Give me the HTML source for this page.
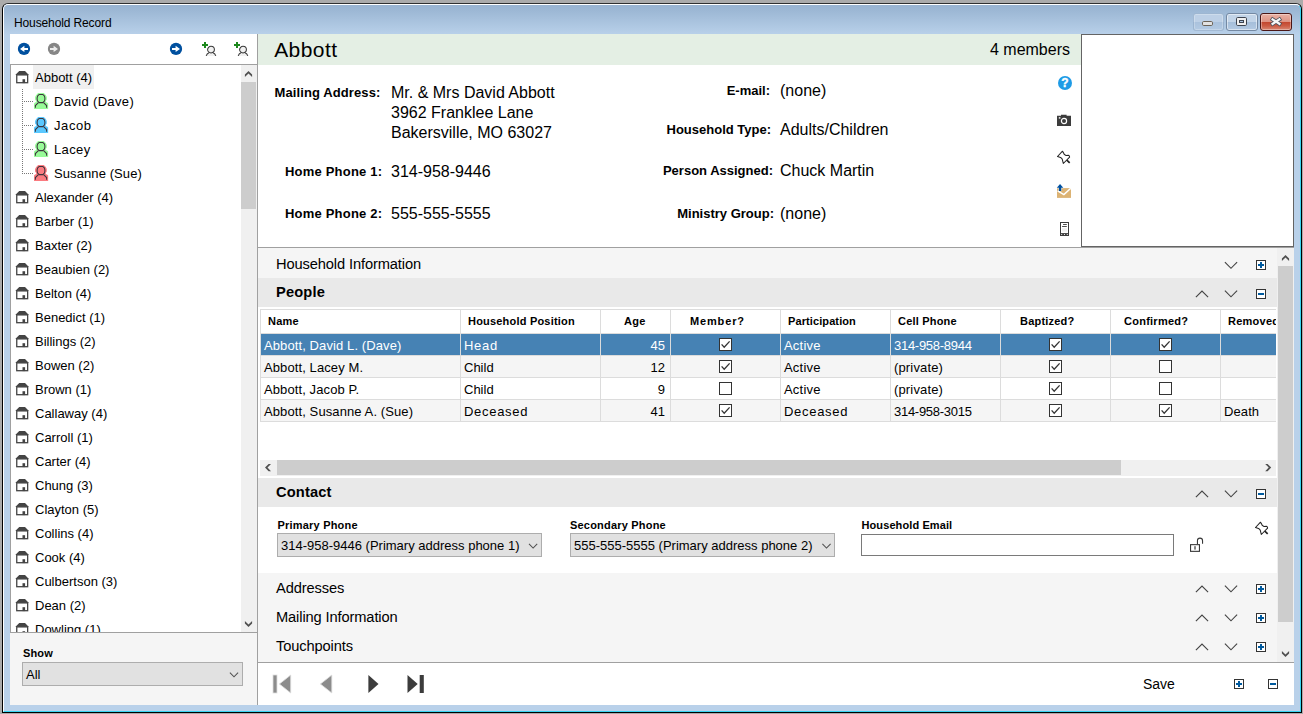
<!DOCTYPE html>
<html lang="en">
<head>
<meta charset="utf-8">
<title>Household Record</title>
<style>
*{box-sizing:border-box;margin:0;padding:0}
html,body{width:1303px;height:714px;overflow:hidden;background:#ababab}
body{position:relative;font-family:"Liberation Sans",sans-serif;color:#000;font-size:13px}
.win{position:absolute;left:2px;top:3px;width:1300px;height:710px;border:1px solid #000;border-top-color:#303030;border-radius:6px 6px 0 0;background:#b9d1ea;overflow:hidden}
.win .hl{position:absolute;left:0;top:0;right:0;bottom:0;border-radius:5px 5px 0 0;border-top:1px solid #fff;border-left:1px solid #fff;border-right:1px solid #38d4f2;border-bottom:1px solid #38d4f2;background:linear-gradient(#98b3d1 0px,#9db8d5 6px,#b9d1ea 30px,#b9d1ea 100%)}
.t{position:absolute;white-space:nowrap;line-height:1}
svg{position:absolute;overflow:visible}
</style>
</head>
<body>
<div class="win"><div class="hl"></div></div>

<!-- caption -->
<div class="t" style="top:17px;font-size:12px;left:14px;letter-spacing:-0.12px;">Household Record</div>
<div style="position:absolute;left:1193px;top:13px;width:31px;height:18px;background:linear-gradient(#bdd0e6 0 47%,#a9c1dc 47%,#b3cae3 100%);border:1px solid rgba(140,165,195,.55);border-radius:3px;box-shadow:inset 0 0 0 1px rgba(255,255,255,.25)"></div>
<div style="position:absolute;left:1226px;top:13px;width:32px;height:18px;background:linear-gradient(#c2d4e8 0 47%,#a4bdd9 47%,#b3cae3 100%);border:1px solid #7489a3;border-radius:3px;box-shadow:inset 0 0 0 1px rgba(255,255,255,.5)"></div>
<div style="position:absolute;left:1260px;top:13px;width:32px;height:18px;background:linear-gradient(#e9b1a5 0,#de9484 47%,#c1432b 47%,#cc5d45 75%,#d98a76 100%);border:1px solid #4a1616;border-radius:3px;box-shadow:inset 0 0 0 1px rgba(255,255,255,.35)"></div>
<svg style="left:1202px;top:21px" width="11" height="5" viewBox="0 0 11 5"><rect x="0.5" y="0.5" width="10" height="4" rx="1.2" fill="#e2e2e2" stroke="#6b6256" stroke-width="1"/></svg>
<svg style="left:1236px;top:17px" width="11" height="9" viewBox="0 0 11 9"><rect x="0.5" y="0.5" width="10" height="8" rx="1.2" fill="#f0f0f0" stroke="#3d4450" stroke-width="1"/><rect x="3.5" y="3.5" width="4" height="2" fill="#a9c3e0" stroke="#3d4450" stroke-width="1"/></svg>
<svg style="left:1270px;top:17px" width="12" height="9" viewBox="0 0 12 9"><path d="M2.6 2.4L9.4 6.8M9.4 2.4L2.6 6.8" stroke="#49505c" stroke-width="3.9" stroke-linecap="square"/><path d="M2.6 2.4L9.4 6.8M9.4 2.4L2.6 6.8" stroke="#f6f6f6" stroke-width="2.3" stroke-linecap="square"/></svg>
<div style="position:absolute;left:10px;top:34px;width:1284px;height:671px;background:#fff;"></div>
<!-- left panel -->
<svg style="left:17px;top:42px" width="14" height="14" viewBox="0 0 14 14"><g transform="translate(0.5 0.4)"><circle cx="6.5" cy="6.5" r="6.15" fill="#00509f"/><polygon points="2.5,6.5 6.9,3.3 6.9,5.5 10.5,5.5 10.5,7.5 6.9,7.5 6.9,9.7" fill="#fff"/></g></svg>
<svg style="left:47px;top:42px" width="14" height="14" viewBox="0 0 14 14"><g transform="translate(0.5 0.4)"><circle cx="6.5" cy="6.5" r="6.15" fill="#868686"/><polygon points="10.5,6.5 6.1,3.3 6.1,5.5 2.5,5.5 2.5,7.5 6.1,7.5 6.1,9.7" fill="#ececec"/></g></svg>
<svg style="left:169px;top:42px" width="14" height="14" viewBox="0 0 14 14"><g transform="translate(0.5 0.4)"><circle cx="6.5" cy="6.5" r="6.15" fill="#00509f"/><polygon points="10.5,6.5 6.1,3.3 6.1,5.5 2.5,5.5 2.5,7.5 6.1,7.5 6.1,9.7" fill="#fff"/></g></svg>
<svg style="left:202px;top:42px" width="15" height="15" viewBox="0 0 15 15"><rect x="2" y="0" width="2" height="6" fill="#1c881c"/><rect x="0" y="2" width="6" height="2" fill="#1c881c"/><path d="M4.2 14C4.8 12 5.8 11.2 7.2 10.8H10.8C12.2 11.2 13.2 12 13.8 14Z" fill="#f0f0f0"/><ellipse cx="9" cy="7.6" rx="3.4" ry="3.3" fill="#f1f1f1" stroke="#383838" stroke-width="1.05"/><path d="M4.2 13.9C4.8 12 5.8 11.2 7 10.7M13.8 13.9C13.2 12 12.2 11.2 11 10.7" fill="none" stroke="#383838" stroke-width="1.05"/></svg>
<svg style="left:234px;top:42px" width="15" height="15" viewBox="0 0 15 15"><rect x="2" y="0" width="2" height="6" fill="#1c881c"/><rect x="0" y="2" width="6" height="2" fill="#1c881c"/><path d="M4.2 14C4.8 12 5.8 11.2 7.2 10.8H10.8C12.2 11.2 13.2 12 13.8 14Z" fill="#f0f0f0"/><ellipse cx="9" cy="7.6" rx="3.4" ry="3.3" fill="#f1f1f1" stroke="#383838" stroke-width="1.05"/><path d="M4.2 13.9C4.8 12 5.8 11.2 7 10.7M13.8 13.9C13.2 12 12.2 11.2 11 10.7" fill="none" stroke="#383838" stroke-width="1.05"/></svg>
<div style="position:absolute;left:10px;top:64px;width:248px;height:1px;background:#a0a0a0;"></div>
<div style="position:absolute;left:10px;top:64px;width:1px;height:569px;background:#a0a0a0;"></div>
<div style="position:absolute;left:10px;top:632px;width:248px;height:1px;background:#a0a0a0;"></div>
<div style="position:absolute;left:257px;top:34px;width:1px;height:671px;background:#a0a0a0;"></div>
<div style="position:absolute;left:11px;top:65px;width:229px;height:567px;overflow:hidden;background:#fff">
<div style="position:absolute;left:22px;top:0;width:61px;height:24px;background:#f0f0f0"></div>
<div style="position:absolute;left:11px;top:24px;width:1px;height:85px;background:repeating-linear-gradient(#777 0 1px,transparent 1px 2px)"></div>
<div style="position:absolute;left:11px;top:36px;width:11px;height:1px;background:repeating-linear-gradient(90deg,#777 0 1px,transparent 1px 2px)"></div>
<div style="position:absolute;left:11px;top:60px;width:11px;height:1px;background:repeating-linear-gradient(90deg,#777 0 1px,transparent 1px 2px)"></div>
<div style="position:absolute;left:11px;top:84px;width:11px;height:1px;background:repeating-linear-gradient(90deg,#777 0 1px,transparent 1px 2px)"></div>
<div style="position:absolute;left:11px;top:108px;width:11px;height:1px;background:repeating-linear-gradient(90deg,#777 0 1px,transparent 1px 2px)"></div>
<svg style="left:4px;top:6px" width="14" height="13" viewBox="0 0 14 13"><path d="M4.2 0H10L13.9 3.9H0.3Z" fill="#444"/><rect x="1.75" y="3.9" width="10.9" height="7.8" fill="#fff" stroke="#444" stroke-width="1.3"/><rect x="7.5" y="8.2" width="2.6" height="3.9" fill="#444"/></svg>
<div class="t" style="left:24px;top:6px;font-size:13px">Abbott (4)</div>
<svg style="left:22px;top:28px" width="16" height="16" viewBox="0 0 16 16"><g fill="#98fb98"><path d="M5.1 0H10.8L12.8 2L13.8 4V6.6L12.8 8V9L14 9.5L15.15 10.5V16H1.03V10.5L2 9.5L3.2 9V8L2.05 6.6V4L3.2 2Z"/><path d="M6.2 1.4H9.8L11.3 2.9Q11.9 4 11.9 5.5Q11.9 7 11.3 8.1L9.9 9.6H6.1L4.7 8.1Q4.1 7 4.1 5.5Q4.1 4 4.7 2.9Z" fill="none" stroke="#3d353d" stroke-width="1.05"/><path d="M5.4 9.7L2.4 12.5V14.7M10.6 9.7L13.6 12.5V14.7" fill="none" stroke="#3d353d" stroke-width="1.05"/></g></svg>
<div class="t" style="left:43px;top:30px;font-size:13px;letter-spacing:0.35px">David (Dave)</div>
<svg style="left:22px;top:52px" width="16" height="16" viewBox="0 0 16 16"><g fill="#5ac8ff"><path d="M5.1 0H10.8L12.8 2L13.8 4V6.6L12.8 8V9L14 9.5L15.15 10.5V16H1.03V10.5L2 9.5L3.2 9V8L2.05 6.6V4L3.2 2Z"/><path d="M6.2 1.4H9.8L11.3 2.9Q11.9 4 11.9 5.5Q11.9 7 11.3 8.1L9.9 9.6H6.1L4.7 8.1Q4.1 7 4.1 5.5Q4.1 4 4.7 2.9Z" fill="none" stroke="#3d353d" stroke-width="1.05"/><path d="M5.4 9.7L2.4 12.5V14.7M10.6 9.7L13.6 12.5V14.7" fill="none" stroke="#3d353d" stroke-width="1.05"/></g></svg>
<div class="t" style="left:43px;top:54px;font-size:13px;letter-spacing:0.6px">Jacob</div>
<svg style="left:22px;top:76px" width="16" height="16" viewBox="0 0 16 16"><g fill="#98fb98"><path d="M5.1 0H10.8L12.8 2L13.8 4V6.6L12.8 8V9L14 9.5L15.15 10.5V16H1.03V10.5L2 9.5L3.2 9V8L2.05 6.6V4L3.2 2Z"/><path d="M6.2 1.4H9.8L11.3 2.9Q11.9 4 11.9 5.5Q11.9 7 11.3 8.1L9.9 9.6H6.1L4.7 8.1Q4.1 7 4.1 5.5Q4.1 4 4.7 2.9Z" fill="none" stroke="#3d353d" stroke-width="1.05"/><path d="M5.4 9.7L2.4 12.5V14.7M10.6 9.7L13.6 12.5V14.7" fill="none" stroke="#3d353d" stroke-width="1.05"/></g></svg>
<div class="t" style="left:43px;top:78px;font-size:13px;letter-spacing:0.36px">Lacey</div>
<svg style="left:22px;top:100px" width="16" height="16" viewBox="0 0 16 16"><g fill="#fa7b80"><path d="M5.1 0H10.8L12.8 2L13.8 4V6.6L12.8 8V9L14 9.5L15.15 10.5V16H1.03V10.5L2 9.5L3.2 9V8L2.05 6.6V4L3.2 2Z"/><path d="M6.2 1.4H9.8L11.3 2.9Q11.9 4 11.9 5.5Q11.9 7 11.3 8.1L9.9 9.6H6.1L4.7 8.1Q4.1 7 4.1 5.5Q4.1 4 4.7 2.9Z" fill="none" stroke="#3d353d" stroke-width="1.05"/><path d="M5.4 9.7L2.4 12.5V14.7M10.6 9.7L13.6 12.5V14.7" fill="none" stroke="#3d353d" stroke-width="1.05"/></g></svg>
<div class="t" style="left:43px;top:102px;font-size:13px;letter-spacing:0.09px">Susanne (Sue)</div>
<svg style="left:4px;top:126px" width="14" height="13" viewBox="0 0 14 13"><path d="M4.2 0H10L13.9 3.9H0.3Z" fill="#444"/><rect x="1.75" y="3.9" width="10.9" height="7.8" fill="#fff" stroke="#444" stroke-width="1.3"/><rect x="7.5" y="8.2" width="2.6" height="3.9" fill="#444"/></svg>
<div class="t" style="left:24px;top:126px;font-size:13px">Alexander (4)</div>
<svg style="left:4px;top:150px" width="14" height="13" viewBox="0 0 14 13"><path d="M4.2 0H10L13.9 3.9H0.3Z" fill="#444"/><rect x="1.75" y="3.9" width="10.9" height="7.8" fill="#fff" stroke="#444" stroke-width="1.3"/><rect x="7.5" y="8.2" width="2.6" height="3.9" fill="#444"/></svg>
<div class="t" style="left:24px;top:150px;font-size:13px">Barber (1)</div>
<svg style="left:4px;top:174px" width="14" height="13" viewBox="0 0 14 13"><path d="M4.2 0H10L13.9 3.9H0.3Z" fill="#444"/><rect x="1.75" y="3.9" width="10.9" height="7.8" fill="#fff" stroke="#444" stroke-width="1.3"/><rect x="7.5" y="8.2" width="2.6" height="3.9" fill="#444"/></svg>
<div class="t" style="left:24px;top:174px;font-size:13px">Baxter (2)</div>
<svg style="left:4px;top:198px" width="14" height="13" viewBox="0 0 14 13"><path d="M4.2 0H10L13.9 3.9H0.3Z" fill="#444"/><rect x="1.75" y="3.9" width="10.9" height="7.8" fill="#fff" stroke="#444" stroke-width="1.3"/><rect x="7.5" y="8.2" width="2.6" height="3.9" fill="#444"/></svg>
<div class="t" style="left:24px;top:198px;font-size:13px">Beaubien (2)</div>
<svg style="left:4px;top:222px" width="14" height="13" viewBox="0 0 14 13"><path d="M4.2 0H10L13.9 3.9H0.3Z" fill="#444"/><rect x="1.75" y="3.9" width="10.9" height="7.8" fill="#fff" stroke="#444" stroke-width="1.3"/><rect x="7.5" y="8.2" width="2.6" height="3.9" fill="#444"/></svg>
<div class="t" style="left:24px;top:222px;font-size:13px">Belton (4)</div>
<svg style="left:4px;top:246px" width="14" height="13" viewBox="0 0 14 13"><path d="M4.2 0H10L13.9 3.9H0.3Z" fill="#444"/><rect x="1.75" y="3.9" width="10.9" height="7.8" fill="#fff" stroke="#444" stroke-width="1.3"/><rect x="7.5" y="8.2" width="2.6" height="3.9" fill="#444"/></svg>
<div class="t" style="left:24px;top:246px;font-size:13px">Benedict (1)</div>
<svg style="left:4px;top:270px" width="14" height="13" viewBox="0 0 14 13"><path d="M4.2 0H10L13.9 3.9H0.3Z" fill="#444"/><rect x="1.75" y="3.9" width="10.9" height="7.8" fill="#fff" stroke="#444" stroke-width="1.3"/><rect x="7.5" y="8.2" width="2.6" height="3.9" fill="#444"/></svg>
<div class="t" style="left:24px;top:270px;font-size:13px">Billings (2)</div>
<svg style="left:4px;top:294px" width="14" height="13" viewBox="0 0 14 13"><path d="M4.2 0H10L13.9 3.9H0.3Z" fill="#444"/><rect x="1.75" y="3.9" width="10.9" height="7.8" fill="#fff" stroke="#444" stroke-width="1.3"/><rect x="7.5" y="8.2" width="2.6" height="3.9" fill="#444"/></svg>
<div class="t" style="left:24px;top:294px;font-size:13px">Bowen (2)</div>
<svg style="left:4px;top:318px" width="14" height="13" viewBox="0 0 14 13"><path d="M4.2 0H10L13.9 3.9H0.3Z" fill="#444"/><rect x="1.75" y="3.9" width="10.9" height="7.8" fill="#fff" stroke="#444" stroke-width="1.3"/><rect x="7.5" y="8.2" width="2.6" height="3.9" fill="#444"/></svg>
<div class="t" style="left:24px;top:318px;font-size:13px">Brown (1)</div>
<svg style="left:4px;top:342px" width="14" height="13" viewBox="0 0 14 13"><path d="M4.2 0H10L13.9 3.9H0.3Z" fill="#444"/><rect x="1.75" y="3.9" width="10.9" height="7.8" fill="#fff" stroke="#444" stroke-width="1.3"/><rect x="7.5" y="8.2" width="2.6" height="3.9" fill="#444"/></svg>
<div class="t" style="left:24px;top:342px;font-size:13px">Callaway (4)</div>
<svg style="left:4px;top:366px" width="14" height="13" viewBox="0 0 14 13"><path d="M4.2 0H10L13.9 3.9H0.3Z" fill="#444"/><rect x="1.75" y="3.9" width="10.9" height="7.8" fill="#fff" stroke="#444" stroke-width="1.3"/><rect x="7.5" y="8.2" width="2.6" height="3.9" fill="#444"/></svg>
<div class="t" style="left:24px;top:366px;font-size:13px">Carroll (1)</div>
<svg style="left:4px;top:390px" width="14" height="13" viewBox="0 0 14 13"><path d="M4.2 0H10L13.9 3.9H0.3Z" fill="#444"/><rect x="1.75" y="3.9" width="10.9" height="7.8" fill="#fff" stroke="#444" stroke-width="1.3"/><rect x="7.5" y="8.2" width="2.6" height="3.9" fill="#444"/></svg>
<div class="t" style="left:24px;top:390px;font-size:13px">Carter (4)</div>
<svg style="left:4px;top:414px" width="14" height="13" viewBox="0 0 14 13"><path d="M4.2 0H10L13.9 3.9H0.3Z" fill="#444"/><rect x="1.75" y="3.9" width="10.9" height="7.8" fill="#fff" stroke="#444" stroke-width="1.3"/><rect x="7.5" y="8.2" width="2.6" height="3.9" fill="#444"/></svg>
<div class="t" style="left:24px;top:414px;font-size:13px">Chung (3)</div>
<svg style="left:4px;top:438px" width="14" height="13" viewBox="0 0 14 13"><path d="M4.2 0H10L13.9 3.9H0.3Z" fill="#444"/><rect x="1.75" y="3.9" width="10.9" height="7.8" fill="#fff" stroke="#444" stroke-width="1.3"/><rect x="7.5" y="8.2" width="2.6" height="3.9" fill="#444"/></svg>
<div class="t" style="left:24px;top:438px;font-size:13px">Clayton (5)</div>
<svg style="left:4px;top:462px" width="14" height="13" viewBox="0 0 14 13"><path d="M4.2 0H10L13.9 3.9H0.3Z" fill="#444"/><rect x="1.75" y="3.9" width="10.9" height="7.8" fill="#fff" stroke="#444" stroke-width="1.3"/><rect x="7.5" y="8.2" width="2.6" height="3.9" fill="#444"/></svg>
<div class="t" style="left:24px;top:462px;font-size:13px">Collins (4)</div>
<svg style="left:4px;top:486px" width="14" height="13" viewBox="0 0 14 13"><path d="M4.2 0H10L13.9 3.9H0.3Z" fill="#444"/><rect x="1.75" y="3.9" width="10.9" height="7.8" fill="#fff" stroke="#444" stroke-width="1.3"/><rect x="7.5" y="8.2" width="2.6" height="3.9" fill="#444"/></svg>
<div class="t" style="left:24px;top:486px;font-size:13px">Cook (4)</div>
<svg style="left:4px;top:510px" width="14" height="13" viewBox="0 0 14 13"><path d="M4.2 0H10L13.9 3.9H0.3Z" fill="#444"/><rect x="1.75" y="3.9" width="10.9" height="7.8" fill="#fff" stroke="#444" stroke-width="1.3"/><rect x="7.5" y="8.2" width="2.6" height="3.9" fill="#444"/></svg>
<div class="t" style="left:24px;top:510px;font-size:13px">Culbertson (3)</div>
<svg style="left:4px;top:534px" width="14" height="13" viewBox="0 0 14 13"><path d="M4.2 0H10L13.9 3.9H0.3Z" fill="#444"/><rect x="1.75" y="3.9" width="10.9" height="7.8" fill="#fff" stroke="#444" stroke-width="1.3"/><rect x="7.5" y="8.2" width="2.6" height="3.9" fill="#444"/></svg>
<div class="t" style="left:24px;top:534px;font-size:13px">Dean (2)</div>
<svg style="left:4px;top:558px" width="14" height="13" viewBox="0 0 14 13"><path d="M4.2 0H10L13.9 3.9H0.3Z" fill="#444"/><rect x="1.75" y="3.9" width="10.9" height="7.8" fill="#fff" stroke="#444" stroke-width="1.3"/><rect x="7.5" y="8.2" width="2.6" height="3.9" fill="#444"/></svg>
<div class="t" style="left:24px;top:558px;font-size:13px">Dowling (1)</div>
</div>
<div style="position:absolute;left:241px;top:65px;width:16px;height:567px;background:#f0f0f0;"></div>
<div style="position:absolute;left:241px;top:82px;width:15px;height:127px;background:#cdcdcd;"></div>
<svg style="left:244px;top:71px" width="9" height="6" viewBox="0 0 9 6"><g transform="translate(0.9 0)"><polygon points="0,3.6 3.6,0 7.2,3.6 7.2,6 3.6,2.5 0,6" fill="#505050"/></g></svg>
<svg style="left:244px;top:621px" width="9" height="6" viewBox="0 0 9 6"><g transform="translate(0.9 0)"><polygon points="0,2.4 3.6,6 7.2,2.4 7.2,0 3.6,3.5 0,0" fill="#505050"/></g></svg>
<div style="position:absolute;left:10px;top:633px;width:247px;height:72px;background:#f5f5f5;"></div>
<div class="t" style="top:648px;font-size:11px;left:23px;font-weight:bold;letter-spacing:0.15px;">Show</div>
<div style="position:absolute;left:22px;top:662px;width:221px;height:24px;background:#e1e1e1;border:1px solid #adadad"></div>
<div class="t" style="top:668px;font-size:13px;left:26px;">All</div>
<svg style="left:229px;top:672px" width="10" height="6" viewBox="0 0 10 6"><g transform="translate(0.5 0.3)"><path d="M0.4 0.4L4.5 4.5L8.6 0.4" fill="none" stroke="#505050" stroke-width="1.05"/></g></svg>
<!-- header + info -->
<div style="position:absolute;left:258px;top:34px;width:823px;height:31px;background:#e4efe4;"></div>
<div class="t" style="top:39px;font-size:21px;left:274.2px;letter-spacing:0.42px;">Abbott</div>
<div class="t" style="top:42px;font-size:16px;right:233px;">4 members</div>
<div style="position:absolute;left:1081px;top:34px;width:213px;height:213px;background:#fff;border:1px solid #646464"></div>
<div class="t" style="top:86px;font-size:13px;left:274.6px;font-weight:bold;letter-spacing:0.1px;">Mailing Address:</div>
<div class="t" style="top:85px;font-size:16px;left:391px;">Mr. &amp; Mrs David Abbott</div>
<div class="t" style="top:105px;font-size:16px;left:391px;">3962 Franklee Lane</div>
<div class="t" style="top:125px;font-size:16px;left:391px;">Bakersville, MO 63027</div>
<div class="t" style="top:165px;font-size:13px;left:285px;font-weight:bold;letter-spacing:0.2px;">Home Phone 1:</div>
<div class="t" style="top:164px;font-size:16px;left:391px;">314-958-9446</div>
<div class="t" style="top:207px;font-size:13px;left:285px;font-weight:bold;letter-spacing:0.2px;">Home Phone 2:</div>
<div class="t" style="top:206px;font-size:16px;left:391px;">555-555-5555</div>
<div class="t" style="top:84px;font-size:13px;right:533px;font-weight:bold;">E-mail:</div>
<div class="t" style="top:83px;font-size:16px;left:780px;">(none)</div>
<div class="t" style="top:123px;font-size:13px;right:532px;font-weight:bold;">Household Type:</div>
<div class="t" style="top:122px;font-size:16px;left:780px;">Adults/Children</div>
<div class="t" style="top:164px;font-size:13px;right:530px;font-weight:bold;">Person Assigned:</div>
<div class="t" style="top:163px;font-size:16px;left:780px;">Chuck Martin</div>
<div class="t" style="top:207px;font-size:13px;right:529px;font-weight:bold;">Ministry Group:</div>
<div class="t" style="top:206px;font-size:16px;left:780px;">(none)</div>
<svg style="left:1058px;top:76px" width="14" height="14" viewBox="0 0 14 14"><circle cx="7" cy="7" r="7" fill="#1e9be6"/><text x="7" y="11.2" font-family="Liberation Sans,sans-serif" font-weight="bold" font-size="12" fill="#fff" stroke="#fff" stroke-width="0.35" text-anchor="middle">?</text></svg>
<svg style="left:1057px;top:114px" width="14" height="12" viewBox="0 0 14 12"><path d="M4 0.8H9.6V1.8H14V12H0V1.8H4Z" fill="#3c3c3c"/><circle cx="7" cy="7" r="2.6" fill="none" stroke="#fff" stroke-width="1.2"/><rect x="1.8" y="3.2" width="1.6" height="1.4" fill="#fff"/></svg>
<svg style="left:1057px;top:151px" width="14" height="14" viewBox="0 0 14 14"><path d="M5.5 0.2L0.5 5.5L3.5 6.4Q5 7 5.3 8.3L6.3 12.5L12.6 6.1Q12.5 4.5 11.5 4.3L9 4.5Q6.8 3.6 6.4 1.6Z" fill="#fff" stroke="#222" stroke-width="1.05" stroke-linejoin="round"/><path d="M9.8 9.1L12.7 11.8" stroke="#222" stroke-width="1.7"/></svg>
<svg style="left:1057px;top:184px" width="14" height="14" viewBox="0 0 14 14"><path d="M0 4.1H14V13.9H0Z" fill="#dcb374"/><path d="M0.6 6.9L6.9 10.6L13.8 4.2" fill="none" stroke="#fff" stroke-width="1.5"/><path d="M3.05 -0.1L6.3 3.8H4.25V6.9H1.85V3.8H-0.2Z" fill="#00509f" stroke="#fff" stroke-width="0.7" paint-order="stroke"/></svg>
<svg style="left:1060px;top:222px" width="9" height="14" viewBox="0 0 9 14"><rect x="0.5" y="0.5" width="8" height="13" fill="#fff" stroke="#3a3a3a" stroke-width="1"/><path d="M3.1 2.5H6.8M2.1 4.5H6.8" stroke="#3a3a3a" stroke-width="0.9"/><rect x="2.1" y="6.2" width="4.7" height="3.4" fill="#efefef"/><rect x="0" y="11.1" width="9" height="2.9" fill="#3a3a3a"/><circle cx="1.7" cy="12.5" r="0.6" fill="#fff"/><circle cx="4.5" cy="12.5" r="0.6" fill="#fff"/><circle cx="7.3" cy="12.5" r="0.6" fill="#fff"/></svg>
<div style="position:absolute;left:258px;top:247px;width:1036px;height:1px;background:#a0a0a0;"></div>
<!-- sections -->
<div style="position:absolute;left:258px;top:248px;width:1019px;height:30px;background:#f5f5f5;"></div>
<div class="t" style="top:257px;font-size:14.67px;left:276px;letter-spacing:-0.12px;">Household Information</div>
<svg style="left:1224px;top:260px" width="14" height="10" viewBox="0 0 14 10"><path d="M0.9 2.2L7 8.3L13.1 2.2" fill="none" stroke="#444" stroke-width="1.15"/></svg>
<svg style="left:1256px;top:260px" width="10" height="10" viewBox="0 0 10 10"><rect x="0.5" y="0.5" width="9" height="9" fill="#fff" stroke="#333" stroke-width="1"/><rect x="2" y="4" width="6" height="2" fill="#005a9e"/><rect x="4" y="2" width="2" height="6" fill="#005a9e"/></svg>
<div style="position:absolute;left:258px;top:278px;width:1019px;height:29px;background:#e9e9e9;"></div>
<div class="t" style="top:285px;font-size:14.67px;left:276px;font-weight:bold;letter-spacing:0.15px;">People</div>
<svg style="left:1195px;top:289px" width="14" height="10" viewBox="0 0 14 10"><path d="M0.9 8.2L7 2.1L13.1 8.2" fill="none" stroke="#444" stroke-width="1.15"/></svg>
<svg style="left:1224px;top:289px" width="14" height="10" viewBox="0 0 14 10"><path d="M0.9 1.7L7 7.8L13.1 1.7" fill="none" stroke="#444" stroke-width="1.15"/></svg>
<svg style="left:1256px;top:289px" width="10" height="10" viewBox="0 0 10 10"><rect x="0.5" y="0.5" width="9" height="9" fill="#fff" stroke="#333" stroke-width="1"/><rect x="2" y="4" width="6" height="2" fill="#005a9e"/></svg>
<div style="position:absolute;left:258px;top:478px;width:1019px;height:29px;background:#e9e9e9;"></div>
<div class="t" style="top:485px;font-size:14.67px;left:276px;font-weight:bold;letter-spacing:0.15px;">Contact</div>
<svg style="left:1195px;top:489px" width="14" height="10" viewBox="0 0 14 10"><path d="M0.9 8.2L7 2.1L13.1 8.2" fill="none" stroke="#444" stroke-width="1.15"/></svg>
<svg style="left:1224px;top:489px" width="14" height="10" viewBox="0 0 14 10"><path d="M0.9 1.7L7 7.8L13.1 1.7" fill="none" stroke="#444" stroke-width="1.15"/></svg>
<svg style="left:1256px;top:489px" width="10" height="10" viewBox="0 0 10 10"><rect x="0.5" y="0.5" width="9" height="9" fill="#fff" stroke="#333" stroke-width="1"/><rect x="2" y="4" width="6" height="2" fill="#005a9e"/></svg>
<div style="position:absolute;left:258px;top:573px;width:1019px;height:29px;background:#f5f5f5;"></div>
<div class="t" style="top:581px;font-size:14.67px;left:276px;letter-spacing:-0.12px;">Addresses</div>
<svg style="left:1195px;top:584px" width="14" height="10" viewBox="0 0 14 10"><path d="M0.9 8.2L7 2.1L13.1 8.2" fill="none" stroke="#444" stroke-width="1.15"/></svg>
<svg style="left:1224px;top:584px" width="14" height="10" viewBox="0 0 14 10"><path d="M0.9 1.7L7 7.8L13.1 1.7" fill="none" stroke="#444" stroke-width="1.15"/></svg>
<svg style="left:1256px;top:584px" width="10" height="10" viewBox="0 0 10 10"><rect x="0.5" y="0.5" width="9" height="9" fill="#fff" stroke="#333" stroke-width="1"/><rect x="2" y="4" width="6" height="2" fill="#005a9e"/><rect x="4" y="2" width="2" height="6" fill="#005a9e"/></svg>
<div style="position:absolute;left:258px;top:602px;width:1019px;height:29px;background:#f5f5f5;"></div>
<div class="t" style="top:610px;font-size:14.67px;left:276px;letter-spacing:-0.12px;">Mailing Information</div>
<svg style="left:1195px;top:613px" width="14" height="10" viewBox="0 0 14 10"><path d="M0.9 8.2L7 2.1L13.1 8.2" fill="none" stroke="#444" stroke-width="1.15"/></svg>
<svg style="left:1224px;top:613px" width="14" height="10" viewBox="0 0 14 10"><path d="M0.9 1.7L7 7.8L13.1 1.7" fill="none" stroke="#444" stroke-width="1.15"/></svg>
<svg style="left:1256px;top:613px" width="10" height="10" viewBox="0 0 10 10"><rect x="0.5" y="0.5" width="9" height="9" fill="#fff" stroke="#333" stroke-width="1"/><rect x="2" y="4" width="6" height="2" fill="#005a9e"/><rect x="4" y="2" width="2" height="6" fill="#005a9e"/></svg>
<div style="position:absolute;left:258px;top:631px;width:1019px;height:31px;background:#f5f5f5;"></div>
<div class="t" style="top:639px;font-size:14.67px;left:276px;letter-spacing:-0.12px;">Touchpoints</div>
<svg style="left:1195px;top:642px" width="14" height="10" viewBox="0 0 14 10"><path d="M0.9 8.2L7 2.1L13.1 8.2" fill="none" stroke="#444" stroke-width="1.15"/></svg>
<svg style="left:1224px;top:642px" width="14" height="10" viewBox="0 0 14 10"><path d="M0.9 1.7L7 7.8L13.1 1.7" fill="none" stroke="#444" stroke-width="1.15"/></svg>
<svg style="left:1256px;top:642px" width="10" height="10" viewBox="0 0 10 10"><rect x="0.5" y="0.5" width="9" height="9" fill="#fff" stroke="#333" stroke-width="1"/><rect x="2" y="4" width="6" height="2" fill="#005a9e"/><rect x="4" y="2" width="2" height="6" fill="#005a9e"/></svg>
<div style="position:absolute;left:1277px;top:248px;width:17px;height:414px;background:#f0f0f0;"></div>
<div style="position:absolute;left:1278px;top:266px;width:15px;height:356px;background:#cdcdcd;"></div>
<svg style="left:1281px;top:255px" width="9" height="6" viewBox="0 0 9 6"><g transform="translate(0.9 0)"><polygon points="0,3.6 3.6,0 7.2,3.6 7.2,6 3.6,2.5 0,6" fill="#505050"/></g></svg>
<svg style="left:1281px;top:651px" width="9" height="6" viewBox="0 0 9 6"><g transform="translate(0.9 0)"><polygon points="0,2.4 3.6,6 7.2,2.4 7.2,0 3.6,3.5 0,0" fill="#505050"/></g></svg>
<div style="position:absolute;left:258px;top:662px;width:1036px;height:1px;background:#a0a0a0;"></div>
<svg style="left:272px;top:674px" width="20" height="20" viewBox="0 0 20 20"><rect x="1" y="1" width="4" height="18" fill="#8c8c8c" stroke="#dedede" stroke-width="0.8"/><path d="M18.7 1V19L7.4 10Z" fill="#8c8c8c" stroke="#dedede" stroke-width="0.8"/></svg>
<svg style="left:319px;top:674px" width="14" height="20" viewBox="0 0 14 20"><path d="M12.8 1V19L1.4 10Z" fill="#8c8c8c" stroke="#dedede" stroke-width="0.8"/></svg>
<svg style="left:368px;top:674px" width="12" height="20" viewBox="0 0 12 20"><path d="M0.4 1V19L10.5 10Z" fill="#3c3c3c"/></svg>
<svg style="left:406px;top:674px" width="19" height="20" viewBox="0 0 19 20"><path d="M1.5 1V19L11.7 10Z" fill="#3c3c3c"/><rect x="13.7" y="1" width="4.1" height="18" fill="#3c3c3c"/></svg>
<div class="t" style="top:677px;font-size:14px;left:1143px;letter-spacing:-0.05px;">Save</div>
<svg style="left:1234px;top:679px" width="10" height="10" viewBox="0 0 10 10"><rect x="0.5" y="0.5" width="9" height="9" fill="#fff" stroke="#333" stroke-width="1"/><rect x="2" y="4" width="6" height="2" fill="#005a9e"/><rect x="4" y="2" width="2" height="6" fill="#005a9e"/></svg>
<svg style="left:1268px;top:679px" width="10" height="10" viewBox="0 0 10 10"><rect x="0.5" y="0.5" width="9" height="9" fill="#fff" stroke="#333" stroke-width="1"/><rect x="2" y="4" width="6" height="2" fill="#005a9e"/></svg>
<!-- people table -->
<div style="position:absolute;left:260px;top:309px;width:1016px;height:151px;overflow:hidden;background:#fff;padding:1px 0 0 1px"><div style="position:absolute;left:0;top:0;width:1016px;height:1px;background:#dcdcdc"></div><div style="position:absolute;left:0;top:0;width:1px;height:113px;background:#dcdcdc"></div><div style="position:absolute;left:1px;top:1px;width:1015px;height:150px">
<div style="position:absolute;left:0;top:24px;width:1015px;height:21px;background:#4682b4"></div>
<div style="position:absolute;left:0;top:46px;width:1015px;height:21px;background:#f5f5f5"></div>
<div style="position:absolute;left:0;top:68px;width:1015px;height:21px;background:#fff"></div>
<div style="position:absolute;left:0;top:90px;width:1015px;height:21px;background:#f5f5f5"></div>
<div style="position:absolute;left:0;top:23px;width:1015px;height:1px;background:#dcdcdc"></div>
<div style="position:absolute;left:0;top:45px;width:1015px;height:1px;background:#dcdcdc"></div>
<div style="position:absolute;left:0;top:67px;width:1015px;height:1px;background:#dcdcdc"></div>
<div style="position:absolute;left:0;top:89px;width:1015px;height:1px;background:#dcdcdc"></div>
<div style="position:absolute;left:0;top:111px;width:1015px;height:1px;background:#dcdcdc"></div>
<div style="position:absolute;left:199px;top:0;width:1px;height:112px;background:#dcdcdc"></div>
<div style="position:absolute;left:339px;top:0;width:1px;height:112px;background:#dcdcdc"></div>
<div style="position:absolute;left:409px;top:0;width:1px;height:112px;background:#dcdcdc"></div>
<div style="position:absolute;left:519px;top:0;width:1px;height:112px;background:#dcdcdc"></div>
<div style="position:absolute;left:629px;top:0;width:1px;height:112px;background:#dcdcdc"></div>
<div style="position:absolute;left:739px;top:0;width:1px;height:112px;background:#dcdcdc"></div>
<div style="position:absolute;left:849px;top:0;width:1px;height:112px;background:#dcdcdc"></div>
<div style="position:absolute;left:959px;top:0;width:1px;height:112px;background:#dcdcdc"></div>
<div class="t" style="top:6px;font-size:11px;left:7px;font-weight:bold;letter-spacing:0.25px;">Name</div>
<div class="t" style="top:6px;font-size:11px;left:207px;font-weight:bold;letter-spacing:0.2px;">Household Position</div>
<div class="t" style="top:6px;font-size:11px;left:363px;font-weight:bold;letter-spacing:0.25px;">Age</div>
<div class="t" style="top:6px;font-size:11px;left:429px;font-weight:bold;letter-spacing:0.85px;">Member?</div>
<div class="t" style="top:6px;font-size:11px;left:527px;font-weight:bold;letter-spacing:0.1px;">Participation</div>
<div class="t" style="top:6px;font-size:11px;left:637px;font-weight:bold;letter-spacing:0.2px;">Cell Phone</div>
<div class="t" style="top:6px;font-size:11px;left:759px;font-weight:bold;letter-spacing:0.2px;">Baptized?</div>
<div class="t" style="top:6px;font-size:11px;left:863px;font-weight:bold;letter-spacing:0.25px;">Confirmed?</div>
<div class="t" style="top:6px;font-size:11px;left:967px;font-weight:bold;letter-spacing:0.25px;">Removed</div>
<div class="t" style="top:29px;font-size:13px;left:3px;color:#fff;letter-spacing:0.1px;">Abbott, David L. (Dave)</div>
<div class="t" style="top:29px;font-size:13px;left:203px;color:#fff;letter-spacing:0.7px;">Head</div>
<div class="t" style="top:29px;font-size:13px;right:611px;color:#fff;">45</div>
<div class="t" style="top:29px;font-size:13px;left:523px;color:#fff;letter-spacing:0.2px;">Active</div>
<div class="t" style="top:29px;font-size:13px;left:633px;color:#fff;letter-spacing:-0.28px;">314-958-8944</div>
<svg style="left:458px;top:28px" width="13" height="13" viewBox="0 0 13 13"><rect x="0.5" y="0.5" width="12" height="12" fill="#fff" stroke="#333" stroke-width="1"/><path d="M2.6 6.4L5.2 9.2L10.6 3.4" fill="none" stroke="#333" stroke-width="1.3"/></svg>
<svg style="left:788px;top:28px" width="13" height="13" viewBox="0 0 13 13"><rect x="0.5" y="0.5" width="12" height="12" fill="#fff" stroke="#333" stroke-width="1"/><path d="M2.6 6.4L5.2 9.2L10.6 3.4" fill="none" stroke="#333" stroke-width="1.3"/></svg>
<svg style="left:898px;top:28px" width="13" height="13" viewBox="0 0 13 13"><rect x="0.5" y="0.5" width="12" height="12" fill="#fff" stroke="#333" stroke-width="1"/><path d="M2.6 6.4L5.2 9.2L10.6 3.4" fill="none" stroke="#333" stroke-width="1.3"/></svg>
<div class="t" style="top:51px;font-size:13px;left:3px;color:#000;letter-spacing:0.1px;">Abbott, Lacey M.</div>
<div class="t" style="top:51px;font-size:13px;left:203px;color:#000;letter-spacing:0px;">Child</div>
<div class="t" style="top:51px;font-size:13px;right:611px;color:#000;">12</div>
<div class="t" style="top:51px;font-size:13px;left:523px;color:#000;letter-spacing:0.2px;">Active</div>
<div class="t" style="top:51px;font-size:13px;left:633px;color:#000;letter-spacing:0.15px;">(private)</div>
<svg style="left:458px;top:50px" width="13" height="13" viewBox="0 0 13 13"><rect x="0.5" y="0.5" width="12" height="12" fill="#fff" stroke="#333" stroke-width="1"/><path d="M2.6 6.4L5.2 9.2L10.6 3.4" fill="none" stroke="#333" stroke-width="1.3"/></svg>
<svg style="left:788px;top:50px" width="13" height="13" viewBox="0 0 13 13"><rect x="0.5" y="0.5" width="12" height="12" fill="#fff" stroke="#333" stroke-width="1"/><path d="M2.6 6.4L5.2 9.2L10.6 3.4" fill="none" stroke="#333" stroke-width="1.3"/></svg>
<svg style="left:898px;top:50px" width="13" height="13" viewBox="0 0 13 13"><rect x="0.5" y="0.5" width="12" height="12" fill="#fff" stroke="#333" stroke-width="1"/></svg>
<div class="t" style="top:73px;font-size:13px;left:3px;color:#000;letter-spacing:0.1px;">Abbott, Jacob P.</div>
<div class="t" style="top:73px;font-size:13px;left:203px;color:#000;letter-spacing:0px;">Child</div>
<div class="t" style="top:73px;font-size:13px;right:611px;color:#000;">9</div>
<div class="t" style="top:73px;font-size:13px;left:523px;color:#000;letter-spacing:0.2px;">Active</div>
<div class="t" style="top:73px;font-size:13px;left:633px;color:#000;letter-spacing:0.15px;">(private)</div>
<svg style="left:458px;top:72px" width="13" height="13" viewBox="0 0 13 13"><rect x="0.5" y="0.5" width="12" height="12" fill="#fff" stroke="#333" stroke-width="1"/></svg>
<svg style="left:788px;top:72px" width="13" height="13" viewBox="0 0 13 13"><rect x="0.5" y="0.5" width="12" height="12" fill="#fff" stroke="#333" stroke-width="1"/><path d="M2.6 6.4L5.2 9.2L10.6 3.4" fill="none" stroke="#333" stroke-width="1.3"/></svg>
<svg style="left:898px;top:72px" width="13" height="13" viewBox="0 0 13 13"><rect x="0.5" y="0.5" width="12" height="12" fill="#fff" stroke="#333" stroke-width="1"/></svg>
<div class="t" style="top:95px;font-size:13px;left:3px;color:#000;letter-spacing:0.1px;">Abbott, Susanne A. (Sue)</div>
<div class="t" style="top:95px;font-size:13px;left:203px;color:#000;letter-spacing:0.7px;">Deceased</div>
<div class="t" style="top:95px;font-size:13px;right:611px;color:#000;">41</div>
<div class="t" style="top:95px;font-size:13px;left:523px;color:#000;letter-spacing:0.7px;">Deceased</div>
<div class="t" style="top:95px;font-size:13px;left:633px;color:#000;letter-spacing:-0.28px;">314-958-3015</div>
<div class="t" style="top:95px;font-size:13px;left:963px;color:#000;letter-spacing:0.1px;">Death</div>
<svg style="left:458px;top:94px" width="13" height="13" viewBox="0 0 13 13"><rect x="0.5" y="0.5" width="12" height="12" fill="#fff" stroke="#333" stroke-width="1"/><path d="M2.6 6.4L5.2 9.2L10.6 3.4" fill="none" stroke="#333" stroke-width="1.3"/></svg>
<svg style="left:788px;top:94px" width="13" height="13" viewBox="0 0 13 13"><rect x="0.5" y="0.5" width="12" height="12" fill="#fff" stroke="#333" stroke-width="1"/><path d="M2.6 6.4L5.2 9.2L10.6 3.4" fill="none" stroke="#333" stroke-width="1.3"/></svg>
<svg style="left:898px;top:94px" width="13" height="13" viewBox="0 0 13 13"><rect x="0.5" y="0.5" width="12" height="12" fill="#fff" stroke="#333" stroke-width="1"/><path d="M2.6 6.4L5.2 9.2L10.6 3.4" fill="none" stroke="#333" stroke-width="1.3"/></svg>
</div></div>
<div style="position:absolute;left:260px;top:460px;width:1016px;height:16px;background:#f0f0f0;"></div>
<div style="position:absolute;left:277px;top:460px;width:844px;height:15px;background:#cdcdcd;"></div>
<svg style="left:265px;top:464px" width="6" height="8" viewBox="0 0 6 8"><polygon points="3.6,0 0,3.6 3.6,7.2 6,7.2 2.5,3.6 6,0" fill="#505050"/></svg>
<svg style="left:1265px;top:464px" width="7" height="8" viewBox="0 0 7 8"><g transform="translate(0.2 0)"><polygon points="2.4,0 6,3.6 2.4,7.2 0,7.2 3.5,3.6 0,0" fill="#505050"/></g></svg>
<!-- contact body -->
<div class="t" style="top:520px;font-size:11px;left:277.5px;font-weight:bold;letter-spacing:0.2px;">Primary Phone</div>
<div style="position:absolute;left:277px;top:533px;width:265px;height:24px;background:#e1e1e1;border:1px solid #adadad"></div>
<div class="t" style="top:539px;font-size:13px;left:281px;">314-958-9446 (Primary address phone 1)</div>
<svg style="left:528px;top:543px" width="10" height="6" viewBox="0 0 10 6"><g transform="translate(0.6 0.5)"><path d="M0.4 0.4L4.5 4.5L8.6 0.4" fill="none" stroke="#505050" stroke-width="1.05"/></g></svg>
<div class="t" style="top:520px;font-size:11px;left:570px;font-weight:bold;letter-spacing:0.2px;">Secondary Phone</div>
<div style="position:absolute;left:570px;top:533px;width:265px;height:24px;background:#e1e1e1;border:1px solid #adadad"></div>
<div class="t" style="top:539px;font-size:13px;left:574px;">555-555-5555 (Primary address phone 2)</div>
<svg style="left:822px;top:543px" width="9" height="6" viewBox="0 0 9 6"><g transform="translate(0 0.5)"><path d="M0.4 0.4L4.5 4.5L8.6 0.4" fill="none" stroke="#505050" stroke-width="1.05"/></g></svg>
<div class="t" style="top:520px;font-size:11px;left:861.5px;font-weight:bold;letter-spacing:0.1px;">Household Email</div>
<div style="position:absolute;left:861px;top:534px;width:313px;height:22px;background:#fff;border:1px solid #7a7a7a"></div>
<svg style="left:1190px;top:538px" width="14" height="14" viewBox="0 0 14 14"><rect x="0.55" y="6.65" width="8.9" height="6.7" fill="#fff" stroke="#383838" stroke-width="1.1"/><path d="M7.45 6.1V2.7A2.55 2.55 0 0 1 12.55 2.7V5.8" fill="none" stroke="#383838" stroke-width="1.1"/><rect x="4.2" y="8.2" width="1.6" height="3.4" fill="#666"/></svg>
<svg style="left:1255px;top:522px" width="14" height="14" viewBox="0 0 14 14"><path d="M5.5 0.2L0.5 5.5L3.5 6.4Q5 7 5.3 8.3L6.3 12.5L12.6 6.1Q12.5 4.5 11.5 4.3L9 4.5Q6.8 3.6 6.4 1.6Z" fill="#fff" stroke="#222" stroke-width="1.05" stroke-linejoin="round"/><path d="M9.8 9.1L12.7 11.8" stroke="#222" stroke-width="1.7"/></svg>
</body>
</html>
